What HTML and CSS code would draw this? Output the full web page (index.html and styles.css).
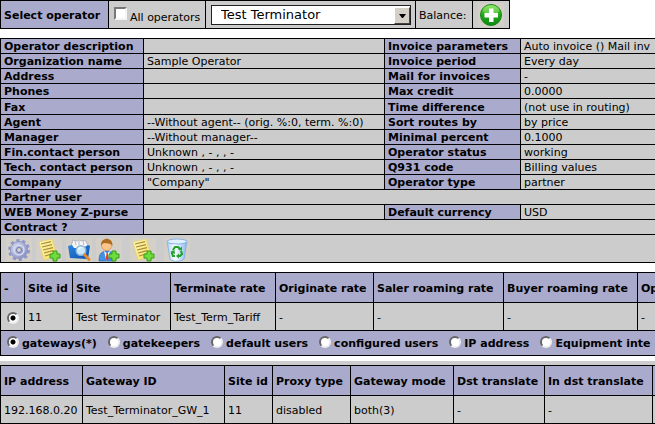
FILE: index.html
```html
<!DOCTYPE html>
<html lang="en">
<head>
<meta charset="utf-8">
<title>Operator</title>
<link rel="stylesheet" href="styles.css">
</head>
<body>
<svg class="defs" aria-hidden="true">
  <defs>
    <linearGradient id="green" x1="0" y1="0" x2="0" y2="1"><stop offset="0" stop-color="#7be04c"/><stop offset=".5" stop-color="#22a51b"/><stop offset="1" stop-color="#0c8a12"/></linearGradient>
    <linearGradient id="paper" x1="0" y1="0" x2="1" y2="1"><stop offset="0" stop-color="#fff9b8"/><stop offset="1" stop-color="#f6dc5c"/></linearGradient>
    <linearGradient id="steel" x1="0" y1="0" x2="1" y2="1"><stop offset="0" stop-color="#d3d9ef"/><stop offset="1" stop-color="#8088bd"/></linearGradient>
    <linearGradient id="blue" x1="0" y1="0" x2="1" y2="1"><stop offset="0" stop-color="#2b86e0"/><stop offset="1" stop-color="#0b4fae"/></linearGradient>
    <linearGradient id="bin" x1="0" y1="0" x2="1" y2="0"><stop offset="0" stop-color="#a9d2f8"/><stop offset=".4" stop-color="#fff"/><stop offset="1" stop-color="#86b6ec"/></linearGradient>
    <symbol id="plus" viewBox="0 0 12 12"><path d="M4 1h4v3h3v4H8v3H4V8H1V4h3z" fill="#70dc3c" stroke="#319d1b"/></symbol>
    <symbol id="note" viewBox="0 0 24 24">
      <path d="M2 4 15 1l5 17-13 4z" fill="url(#paper)" stroke="#e9d36a" stroke-width=".7"/>
      <path d="m4 6 10-2.300M5 9l10-2.300M6 12l10-2.300M7 15l9-2.300M8 18l7-2" stroke="#a88b3c" stroke-width="1.200" fill="none"/>
      <use href="#plus" x="12" y="12" width="12" height="12"/>
    </symbol>
  </defs>
</svg>
<main class="page">
  <table class="grid operator-bar">
    <tr>
      <th class="bar-title"><label for="operator">Select operator</label></th>
      <td class="bar-all"><label class="check"><input type="checkbox">All operators</label></td>
      <td class="bar-select">
        <div class="picker">
          <select id="operator"><option>Test Terminator</option></select>
          <span class="picker-arrow"><svg viewBox="0 0 7 4" width="7" height="4"><path d="M0 0h7L4 4H3z"/></svg></span>
        </div>
      </td>
      <td class="bar-balance">Balance:</td>
      <td class="bar-add">
        <button class="icon" type="button" aria-label="Add balance"><svg viewBox="0 0 24 24" width="24" height="24">
          <circle cx="12" cy="12" r="10.500" fill="url(#green)" stroke="#168618"/>
          <ellipse cx="12" cy="7" rx="8" ry="5" fill="#b6f591" opacity=".35"/>
          <path d="M10 5.500h4.500V10H19v4.500h-4.500V19H10v-4.500H5.500V10H10z" fill="#fff"/>
        </svg></button>
      </td>
    </tr>
  </table>

  <table class="grid details">
    <colgroup><col class="d-label"><col class="d-value"><col class="d-label2"><col></colgroup>
    <tr><th>Operator description</th><td></td><th>Invoice parameters</th><td>Auto invoice () Mail inv</td></tr>
    <tr><th>Organization name</th><td>Sample Operator</td><th>Invoice period</th><td>Every day</td></tr>
    <tr><th>Address</th><td></td><th>Mail for invoices</th><td>-</td></tr>
    <tr><th>Phones</th><td></td><th>Max credit</th><td>0.0000</td></tr>
    <tr class="group-end"><th>Fax</th><td></td><th>Time difference</th><td>(not use in routing)</td></tr>
    <tr><th>Agent</th><td>--Without agent-- (orig. %:0, term. %:0)</td><th>Sort routes by</th><td>by price</td></tr>
    <tr><th>Manager</th><td>--Without manager--</td><th>Minimal percent</th><td>0.1000</td></tr>
    <tr><th>Fin.contact person</th><td>Unknown , - , , -</td><th>Operator status</th><td>working</td></tr>
    <tr><th>Tech. contact person</th><td>Unknown , - , , -</td><th>Q931 code</th><td>Billing values</td></tr>
    <tr><th>Company</th><td>"Company"</td><th>Operator type</th><td>partner</td></tr>
    <tr><th>Partner user</th><td colspan="3"></td></tr>
    <tr><th>WEB Money Z-purse</th><td></td><th>Default currency</th><td>USD</td></tr>
    <tr><th>Contract ?</th><td colspan="3"></td></tr>
    <tr>
      <td class="tools" colspan="4">
        <div class="toolbar">
          <button class="icon" type="button" aria-label="Settings"><svg viewBox="0 0 24 24" width="24" height="24">
            <circle cx="12" cy="12" r="9.500" fill="none" stroke="#8f98c8" stroke-width="3" stroke-dasharray="3.200 2.770"/>
            <circle cx="12" cy="12" r="8.500" fill="url(#steel)" stroke="#8b93c2"/>
            <circle cx="12" cy="12" r="5" fill="none" stroke="#d6dcf2" stroke-width="1.500"/>
            <circle cx="12" cy="12" r="2.500" fill="#d4d0c8" stroke="#7078ac"/>
          </svg></button>
          <button class="icon" type="button" aria-label="Add note"><svg viewBox="0 0 24 24" width="24" height="24"><use href="#note"/></svg></button>
          <button class="icon" type="button" aria-label="Search files"><svg viewBox="0 0 24 24" width="24" height="24">
            <path d="M4 8 6 2l4 1 2-1 3 1 3-1 3 5v5H4z" fill="#f4f5f7" stroke="#a7abb3" stroke-width=".8"/>
            <path d="m8 3 1 4m3-4v4m4-4 1 4" stroke="#b9bdc6"/>
            <path d="m1 8 4-1 2 3h9l5-3 2 1-2 13-18-1z" fill="url(#blue)"/>
            <circle cx="14" cy="12.500" r="4.800" fill="#c9e8fb" stroke="#8eb4d8" stroke-width="1.500"/>
            <path d="m17.500 16.500 4.500 5" stroke="#e58a2c" stroke-width="2.800" stroke-linecap="round"/>
            <path d="M11.500 11.500a3 3 0 0 1 3-2" stroke="#fff" stroke-width="1.200" fill="none"/>
          </svg></button>
          <button class="icon" type="button" aria-label="Add user"><svg viewBox="0 0 24 24" width="24" height="24">
            <path d="M2 23c0-7 2-9 7-10 5 0 8 2 8 10z" fill="#3f91e6" stroke="#2667b7" stroke-width=".7"/>
            <path d="m7 13 3 2.500 3-2.500-2 8-1 2-1-2z" fill="#fff"/><path d="m9.500 15-.7 6 1.500 2 1.200-2-.7-6z" fill="#dc3b30"/>
            <circle cx="9.500" cy="7.500" r="5" fill="#fac58a" stroke="#cb8742" stroke-width=".6"/>
            <path d="M4 8c-1-9 12-10 11.500 0C14 5 11 6 8 5 6 5 5 6 4 8z" fill="#ae6d1e"/>
            <use href="#plus" x="11" y="12" width="12" height="12"/>
          </svg></button>
          <button class="icon spaced" type="button" aria-label="Add contract"><svg viewBox="0 0 24 24" width="24" height="24"><use href="#note"/></svg></button>
          <button class="icon spaced" type="button" aria-label="Delete"><svg viewBox="0 0 24 24" width="24" height="24">
            <path d="M2 3h20l-3 18c-3 3-11 3-14 0z" fill="url(#bin)" stroke="#79a9e1" stroke-width=".7"/>
            <ellipse cx="12" cy="3.500" rx="10" ry="2.500" fill="#e1f0fd" stroke="#71a5df" stroke-width=".8"/>
            <path d="m8 12 2-3h3l2 2M16 13l1 3-2 2h-2M10 18H8l-1-3 1-2" fill="none" stroke="#22a32b" stroke-width="2.200"/>
            <path d="m13 12 4 .5V8.500zM14 15.500v5L11 18zM5.500 14 9.500 12l.5 4z" fill="#22a32b"/>
          </svg></button>
        </div>
      </td>
    </tr>
  </table>

  <table class="grid listing sites">
    <colgroup><col class="s-pick"><col class="s-id"><col class="s-name"><col class="s-term"><col class="s-orig"><col class="s-saler"><col class="s-buyer"><col></colgroup>
    <tr><th>-</th><th>Site id</th><th>Site</th><th>Terminate rate</th><th>Originate rate</th><th>Saler roaming rate</th><th>Buyer roaming rate</th><th>Op</th></tr>
    <tr><td><input type="radio" name="site" aria-label="Site 11" checked></td><td>11</td><td>Test Terminator</td><td>Test_Term_Tariff</td><td>-</td><td>-</td><td>-</td><td>-</td></tr>
    <tr>
      <th class="views" colspan="8">
        <div class="view-list">
          <label><input type="radio" name="view" checked>gateways(*)</label>
          <label><input type="radio" name="view">gatekeepers</label>
          <label><input type="radio" name="view">default users</label>
          <label><input type="radio" name="view">configured users</label>
          <label><input type="radio" name="view">IP address</label>
          <label><input type="radio" name="view">Equipment inte</label>
        </div>
      </th>
    </tr>
  </table>

  <section class="gateway-panel">
    <table class="grid listing gateways">
      <colgroup><col class="g-ip"><col class="g-id"><col class="g-site"><col class="g-proxy"><col class="g-mode"><col class="g-dst"><col class="g-in"><col></colgroup>
      <tr><th>IP address</th><th>Gateway ID</th><th>Site id</th><th>Proxy type</th><th>Gateway mode</th><th>Dst translate</th><th>In dst translate</th><th></th></tr>
      <tr><td>192.168.0.20</td><td>Test_Terminator_GW_1</td><td>11</td><td>disabled</td><td>both(3)</td><td>-</td><td>-</td><td></td></tr>
    </table>
  </section>
</main>
</body>
</html>
```
FILE: styles.css
```css
* { box-sizing: border-box; }

body {
  margin: 0;
  background: #fff;
  color: #000;
  font: 11px/12px Verdana, "DejaVu Sans", sans-serif;
}

.defs { position: absolute; width: 0; height: 0; }

.page { overflow: hidden; }

.grid {
  border-collapse: separate;
  border-spacing: 1px;
  background: #000;
  table-layout: fixed;
}

.grid th,
.grid td {
  padding: 2px 3px 0;
  text-align: left;
  vertical-align: middle;
  white-space: nowrap;
  overflow: hidden;
}

.grid th { background: #aaaacc; font-weight: bold; }
.grid td { background: #cccccc; }

/* operator selector */
.operator-bar { width: 510px; margin-bottom: 9px; }
.operator-bar td, .operator-bar th { height: 27px; }
.bar-title { width: 107px; }
.bar-all { width: 96px; }
.bar-select { width: 209px; }
.bar-balance { width: 56px; }
.bar-add { width: 36px; }
.operator-bar .bar-add { padding: 0 5px; }
.operator-bar .bar-select { padding: 1px 4px 0 5px; }
.operator-bar .bar-all { padding: 2px 0 0 5px; }

.check { display: flex; align-items: flex-end; gap: 3px; }

.check input {
  appearance: none;
  flex: none;
  width: 13px;
  height: 13px;
  margin: 0 0 4px;
  border: 2px solid;
  border-color: #777 #f4f4f4 #f4f4f4 #777;
  background: #fff;
}

.picker { position: relative; }

.picker select {
  appearance: none;
  display: block;
  width: 100%;
  height: 20px;
  padding: 0 20px 0 9px;
  border: 1px solid #222;
  border-radius: 0;
  background: #fff;
  color: #000;
  font: 13px/18px "DejaVu Sans", sans-serif;
}

.picker-arrow {
  position: absolute;
  top: 2px;
  right: 1px;
  bottom: 1px;
  display: flex;
  align-items: center;
  justify-content: center;
  width: 16px;
  border: 1px solid;
  border-color: #fff #444 #444 #fff;
  background: #d4d0c8;
  pointer-events: none;
}

.icon {
  display: block;
  width: 26px;
  height: 24px;
  padding: 0 1px;
  border: 0;
  background: #d4d0c8;
}

.icon svg { display: block; }

/* operator details */
.details { width: 760px; margin-bottom: 9px; }
.details th, .details td { height: 14px; }
.details .group-end th, .details .group-end td { height: 15px; }
.d-label { width: 142px; }
.d-value { width: 240px; }
.d-label2 { width: 135px; }
.details .tools { height: 27px; }
.toolbar { display: flex; gap: 4px; padding-left: 2px; }
.toolbar .spaced { margin-left: 4px; }

/* site and gateway lists */
.listing { width: 760px; }
.listing th { height: 29px; }
.listing td { height: 27px; }

.sites { margin-bottom: 5px; }
.s-pick { width: 23px; }
.s-id { width: 47px; }
.s-name { width: 97px; }
.s-term { width: 104px; }
.s-orig { width: 97px; }
.s-saler { width: 129px; }
.s-buyer { width: 133px; }

.listing input {
  appearance: none;
  display: block;
  flex: none;
  width: 12px;
  height: 12px;
  margin: 0 0 0 3px;
  border: 2px solid;
  border-color: #666 #eee #eee #666;
  border-radius: 50%;
  background: #fff;
}

.listing input:checked { background: radial-gradient(circle, #000 2px, #fff 3px); }

.listing .views { height: 24px; }
.view-list { display: flex; gap: 8px; }
.view-list label { display: flex; align-items: center; gap: 3px; }
.view-list label input { margin-bottom: 5px; }

.gateway-panel { padding-top: 4px; background: #cccccc; }
.g-ip { width: 81px; }
.g-id { width: 141px; }
.g-site { width: 47px; }
.g-proxy { width: 77px; }
.g-mode { width: 102px; }
.g-dst { width: 90px; }
.g-in { width: 107px; }
```
